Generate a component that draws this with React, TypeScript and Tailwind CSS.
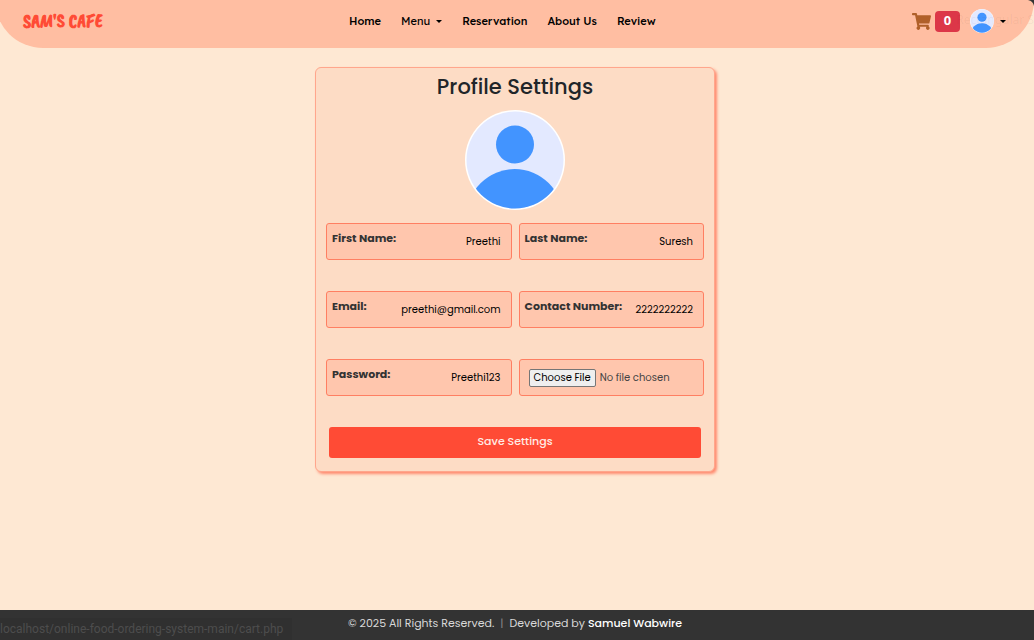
import { useId } from 'react';

function Avatar({ className }: { className: string }) {
  const clip = useId();
  return (
    <svg viewBox="0 0 100 100" className={className} role="img" aria-label="Profile picture">
      <clipPath id={clip}>
        <circle cx="50" cy="50" r="48.5" />
      </clipPath>
      <circle cx="50" cy="50" r="50" fill="#fff" />
      <circle cx="50" cy="50" r="48.5" fill="#e3e9ff" />
      <circle cx="50" cy="34.5" r="19" fill="#4294ff" />
      <circle cx="49.7" cy="107" r="48" fill="#4294ff" clipPath={`url(#${clip})`} />
    </svg>
  );
}

function Caret() {
  return (
    <svg viewBox="0 0 6 3" className="h-[3px] w-1.5" aria-hidden="true">
      <path d="M0 0h6L3 3z" fill="currentColor" />
    </svg>
  );
}

function CartIcon() {
  return (
    <svg viewBox="0 0 576 512" className="h-[17px] w-[19px]" aria-hidden="true">
      <path
        fill="#b0602a"
        d="M528.12 301.319l47.273-208C578.806 78.301 567.391 64 551.99 64H159.208l-9.166-44.81C147.758 8.021 137.93 0 126.529 0H24C10.745 0 0 10.745 0 24v16c0 13.255 10.745 24 24 24h69.883l70.248 343.435C147.325 417.1 136 435.222 136 456c0 30.928 25.072 56 56 56s56-25.072 56-56c0-15.674-6.447-29.835-16.824-40h209.647C430.447 426.165 424 440.326 424 456c0 30.928 25.072 56 56 56s56-25.072 56-56c0-22.172-12.888-41.332-31.579-50.405l5.517-24.276c3.413-15.018-8.002-29.319-23.403-29.319H218.117l-6.545-32h293.145c11.206 0 20.92-7.754 23.403-18.681z"
      />
    </svg>
  );
}

const fieldBox = 'flex h-[37px] min-w-0 rounded-[3px] border border-[#ff7f62] bg-[#ffc6ad] pl-[5px] pr-2.5';

function Field({ id, label, value, type = 'text' }: { id: string; label: string; value: string; type?: string }) {
  return (
    <div className={fieldBox}>
      <label htmlFor={id} className="mt-1.5 shrink-0 text-[11px] leading-4 font-bold text-[#333]">
        {label}
      </label>
      <input
        id={id}
        type={type}
        defaultValue={value}
        className="h-full min-w-0 flex-1 bg-transparent text-right text-[10px] text-black outline-none"
      />
    </div>
  );
}

export default function App() {
  return (
    <div className="relative flex min-h-screen flex-col overflow-hidden bg-[#fee8d3] font-['Poppins','Inter',sans-serif]">
      <header className="-ml-[5px] flex h-12 items-center justify-between rounded-b-[48px] bg-[#ffbea2] px-7 pb-1.5 font-['Lexend','Inter',sans-serif]">
        <a
          href="#home"
          className="font-['Caveat_Brush','Liberation_Sans_Narrow',sans-serif] text-[19px] leading-5 font-bold text-[#ff4b35]"
        >
          SAM'S CAFE
        </a>
        <nav className="flex items-center gap-5 pr-2.5 text-[11px] font-medium text-black">
          <a href="#home">Home</a>
          <button type="button" className="flex items-center gap-1.5 font-normal">
            Menu <Caret />
          </button>
          <a href="#reservation">Reservation</a>
          <a href="#about">About Us</a>
          <a href="#review">Review</a>
        </nav>
        <div className="flex items-center">
          <a href="#cart" aria-label="Cart" className="flex items-center gap-1">
            <CartIcon />
            <span className="flex h-[21px] w-[25px] items-center justify-center rounded bg-[#dc3748] font-['Open_Sans',sans-serif] text-[13px] font-bold text-white">
              0
            </span>
          </a>
          <button type="button" aria-label="Account" className="ml-2.5 flex items-center gap-1.5">
            <Avatar className="size-6" />
            <Caret />
          </button>
        </div>
      </header>
      <span className="pointer-events-none absolute top-2.5 right-0 font-['Noto_Sans',sans-serif] text-xs leading-5 whitespace-nowrap text-black/5">
        Rectangular S
      </span>
      <svg viewBox="0 0 6 6" className="absolute top-0 right-0 size-1.5" aria-hidden="true">
        <path d="M0 0h6v6Q5 1 0 0z" fill="#333" />
      </svg>

      <main className="flex flex-1 items-start justify-center pt-[19px] pr-1">
        <form className="w-full max-w-[400px] rounded-md border border-[#ffa68c] bg-[#fddcc5] px-2.5 pb-[13px] shadow-[2px_2px_3px_#ff8a6f]">
          <h1 className="pt-1 text-center text-[21px] leading-[30px] font-medium text-[#212529]">Profile Settings</h1>
          <Avatar className="mx-auto mt-2 size-[100px]" />
          <div className="mt-[13px] grid grid-cols-2 gap-x-[7px] gap-y-[31px]">
            <Field id="first" label="First Name:" value="Preethi" />
            <Field id="last" label="Last Name:" value="Suresh" />
            <Field id="email" label="Email:" value="preethi@gmail.com" type="email" />
            <Field id="contact" label="Contact Number:" value="2222222222" type="tel" />
            <Field id="password" label="Password:" value="Preethi123" />
            <div className={fieldBox}>
              <input
                type="file"
                aria-label="Profile image"
                className="ml-1 h-[18px] w-full min-w-0 self-center text-[10px] leading-4 text-[#444] file:mr-1 file:h-[18px] file:rounded-xs file:border file:border-solid file:border-[#767676] file:bg-[#efefef] file:px-1 file:text-[10px] file:leading-4 file:text-black"
              />
            </div>
          </div>
          <div className="mt-[31px] px-[3px]">
            <button
              type="button"
              className="h-[31px] w-full rounded-[3px] bg-[#ff4b35] pb-0.5 text-[11px] font-medium text-[#ffebe5]"
            >
              Save Settings
            </button>
          </div>
        </form>
      </main>

      <footer className="flex h-[30px] items-start justify-center bg-[#333] pt-[5px] pr-1 text-[11px] leading-4 text-[#d8d8d8]">
        <span>© 2025 All Rights Reserved.</span>
        <span className="mx-1.5 text-[#888]">|</span>
        <span>
          Developed by{' '}
          <a href="#author" className="font-medium text-white">
            Samuel Wabwire
          </a>
        </span>
      </footer>
      <div className="pointer-events-none absolute bottom-0 left-0 h-[22px] w-[292px] bg-[#303030] font-['Roboto',sans-serif] text-xs leading-[22px] whitespace-nowrap text-[#4d4d4d]">
        localhost/online-food-ordering-system-main/cart.php
      </div>
    </div>
  );
}
